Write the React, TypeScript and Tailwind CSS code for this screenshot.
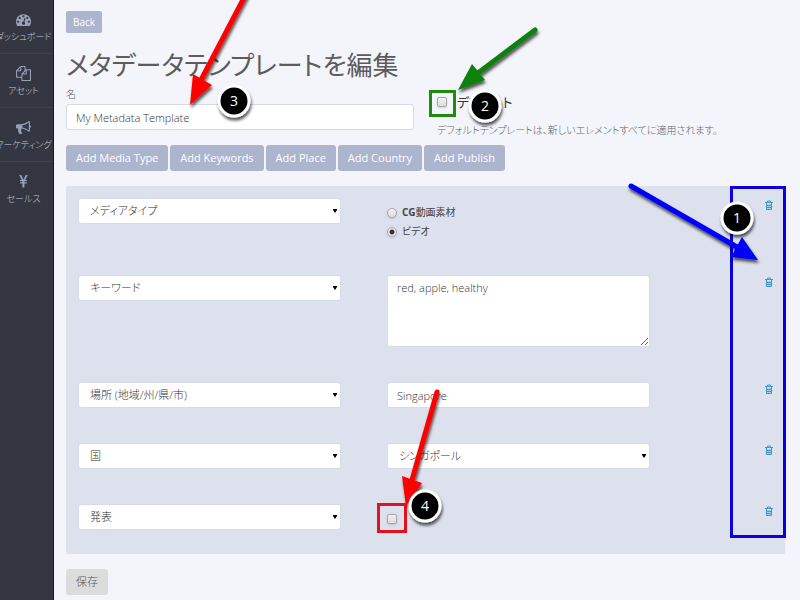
import React from 'react';

const ICONS = {
  dashboard:
    'M384 1152q0-53-37.5-90.5t-90.5-37.5-90.5 37.5-37.5 90.5 37.5 90.5 90.5 37.5 90.5-37.5 37.5-90.5zm192-448q0-53-37.5-90.5t-90.5-37.5-90.5 37.5-37.5 90.5 37.5 90.5 90.5 37.5 90.5-37.5 37.5-90.5zm428 481l101-382q6-26-7.5-48.5t-38.5-29.5-48 6.5-30 39.5l-101 382q-60 5-107 43.5t-63 98.5q-20 77 20 146t117 89 146-20 89-117q16-60-6-117t-72-91zm660-33q0-53-37.5-90.5t-90.5-37.5-90.5 37.5-37.5 90.5 37.5 90.5 90.5 37.5 90.5-37.5 37.5-90.5zm-640-640q0-53-37.5-90.5t-90.5-37.5-90.5 37.5-37.5 90.5 37.5 90.5 90.5 37.5 90.5-37.5 37.5-90.5zm448 192q0-53-37.5-90.5t-90.5-37.5-90.5 37.5-37.5 90.5 37.5 90.5 90.5 37.5 90.5-37.5 37.5-90.5zm320 448q0 261-141 483-19 29-54 29h-1402q-35 0-54-29-141-221-141-483 0-182 71-348t191-286 286-191 348-71 348 71 286 191 191 286 71 348z',
  files:
    'M1696 384q40 0 68 28t28 68v1216q0 40-28 68t-68 28h-960q-40 0-68-28t-28-68v-288h-544q-40 0-68-28t-28-68v-672q0-40 20-88t48-76l408-408q28-28 76-48t88-20h416q40 0 68 28t28 68v328q68-40 128-40h416zm-544 213l-299 299h299v-299zm-640-384l-299 299h299v-299zm196 647l316-316v-416h-384v416q0 40-28 68t-68 28h-416v640h512v-256q0-40 20-88t48-76zm956 804v-1152h-384v416q0 40-28 68t-68 28h-416v640h896z',
  bullhorn:
    'M1664 640q53 0 90.5 37.5t37.5 90.5-37.5 90.5-90.5 37.5v384q0 52-38 90t-90 38q-417-347-812-380-58 19-91 66t-31 100.5 40 92.5q-20 33-23 65.5t6 58 33.5 55 48 50 61.5 50.5q-29 58-111.5 83t-168.5 11.5-132-55.5q-7-23-29.5-87.5t-32-94.5-23-89-15-101 3.5-98.5 22-110.5h-122q-66 0-113-47t-47-113v-192q0-66 47-113t113-47h480q435 0 896-384 52 0 90 38t38 90v384zm-128 604v-954q-394 302-768 343v270q377 42 768 341z',
  yen:
    'M1410 120h-250l-264 570-264-570h-250l300 600h-200v150h284v110h-284v150h284v490h240v-490h284v-150h-284v-110h284v-150h-200z',
};

const NAV: { label: string; icon: keyof typeof ICONS }[] = [
  { label: 'ダッシュボード', icon: 'dashboard' },
  { label: 'アセット', icon: 'files' },
  { label: 'マーケティング', icon: 'bullhorn' },
  { label: 'セールス', icon: 'yen' },
];

const ADD_BUTTONS = ['Add Media Type', 'Add Keywords', 'Add Place', 'Add Country', 'Add Publish'];

const FIELD =
  'w-full rounded-[3px] border border-[#d6dbe7] bg-white text-[11px] font-light text-[#333] outline-none';
const TICK =
  'h-[10px] w-[10px] shrink-0 appearance-none border border-[#a6a6a6] bg-linear-to-b from-[#f2f2f2] to-[#dcdcdc] shadow-sm';

function SelectBox({ label, value }: { label: string; value: string }) {
  return (
    <div className="relative w-[85%]">
      <select aria-label={label} defaultValue={value} className={`${FIELD} block h-[26px] appearance-none px-[11px]`}>
        <option>{value}</option>
      </select>
      <svg className="pointer-events-none absolute top-[11px] right-1 h-1 w-1" viewBox="0 0 4 4" aria-hidden="true">
        <path d="M0 0h4v1L2 4 0 1z" fill="#000" />
      </svg>
    </div>
  );
}

function TrashIcon() {
  return (
    <svg className="h-[10px] w-2" viewBox="0 0 8 10" fill="none" stroke="#3f98c8" aria-hidden="true">
      <path d="M1 4h6v5H1z" fill="#a9d0e6" stroke="none" />
      <path d="M0 2.5h8M2.5 2.5v-1.500h3v1.500M1.500 3v6.500h5V3M2 5.500h4M2 7.500h4" />
    </svg>
  );
}

function Row({ name, children }: { name: string; children: React.ReactNode }) {
  return (
    <div className="grid grid-cols-[309fr_309fr_77fr] items-start">
      <SelectBox label="フィールド" value={name} />
      {children}
      <button type="button" aria-label={`${name}を削除`} className="mt-[2px] flex justify-self-end">
        <TrashIcon />
      </button>
    </div>
  );
}

function Radio({ label, checked, strong }: { label: string; checked?: boolean; strong?: string }) {
  return (
    <label className="flex h-[19px] items-center gap-[5px] text-[10px] text-[#444]">
      <input
        type="radio"
        name="media"
        defaultChecked={checked}
        className={`${TICK} rounded-full checked:bg-[radial-gradient(circle,#333_2px,#f0f0f0_3px)]`}
      />
      <span>
        {strong && <b className="font-bold">{strong}</b>}
        {label}
      </span>
    </label>
  );
}

function Arrow({ line, head, color }: { line: string; head: string; color: string }) {
  return (
    <g filter="url(#shade)">
      <path d={line} stroke={color} strokeWidth="5" strokeLinecap="round" />
      <path d={head} fill={color} />
    </g>
  );
}

function Badge({ x, y, n }: { x: number; y: number; n: number }) {
  return (
    <g>
      <circle cx={x} cy={y} r="15" fill="#000" stroke="#fff" strokeWidth="3" filter="url(#shade)" />
      <text x={x} y={y + 5} textAnchor="middle" fill="#fff" className="text-[14px]">
        {n}
      </text>
    </g>
  );
}

function Annotations() {
  return (
    <svg className="pointer-events-none absolute top-0 left-0" width="800" height="600" fill="none">
      <defs>
        <filter id="shade" x="-30%" y="-30%" width="170%" height="170%">
          <feDropShadow dx="1" dy="3" stdDeviation="1.5" floodColor="#000" floodOpacity="0.65" />
        </filter>
      </defs>
      <rect x="731.5" y="187.5" width="53" height="349" stroke="#0a00e0" strokeWidth="3" />
      <rect x="430.5" y="91.5" width="24" height="24" stroke="#1f8a0c" strokeWidth="3" />
      <Arrow color="#f00" line="M246-6L201 80" head="M190 105L193 74L212 85z" />
      <Arrow color="#088008" line="M535 30L478 73" head="M458 90L472 64L485 80z" />
      <Arrow color="#00f" line="M631 186L737 247" head="M758 260L742 237L731 257z" />
      <Arrow color="#f00" line="M437 392L412 480" head="M406 506L402 476L422 483z" />
      <rect x="378.5" y="504.5" width="27" height="27" stroke="#e4101c" strokeWidth="3" />
      <Badge x={234} y={101} n={3} />
      <Badge x={485} y={106} n={2} />
      <Badge x={737} y={218} n={1} />
      <Badge x={425} y={506} n={4} />
    </svg>
  );
}

export default function App() {
  return (
    <div className="relative flex min-h-screen overflow-hidden bg-[#f3f5fa] font-['Open_Sans','Noto_Sans_CJK_JP',sans-serif] text-[#555] [font-feature-settings:'palt']">
      <nav className="w-[54px] shrink-0 overflow-hidden border-r border-[#17152b] bg-[#343741]">
        {NAV.map(({ label, icon }) => (
          <a
            key={label}
            href="#"
            className="flex h-[54px] flex-col items-center border-b border-[#3e424d] pt-3 pr-[6px] text-[9px] leading-[14px] font-light whitespace-nowrap text-[#c3c9da] last:border-b-0"
          >
            <svg className="mb-[3px] h-[15px] w-[15px] shrink-0" viewBox="0 0 1792 1792" fill="#98a1b9" aria-hidden="true">
              <path d={ICONS[icon]} />
            </svg>
            {label}
          </a>
        ))}
      </nav>

      <main className="min-w-0 flex-1 pt-[11px] pr-[15px] pl-3">
        <button type="button" className="block h-[22px] rounded-[2px] bg-[#adb5ce] px-[7px] text-[10px] text-white">
          Back
        </button>
        <h1 className="mt-4 text-[26px] leading-8 font-normal whitespace-nowrap text-[#5c5c5c]">メタデータテンプレートを編集</h1>

        <div className="mt-[6px] grid grid-cols-2 gap-[23px]">
          <div>
            <label htmlFor="name" className="block text-[10px] leading-[14px] font-light">
              名
            </label>
            <input id="name" defaultValue="My Metadata Template" className={`${FIELD} mt-[3px] block h-[26px] px-[9px]`} />
          </div>
          <div className="pt-2">
            <label className="flex items-center gap-[10px] text-[13px] leading-[14px] text-[#333]">
              <input type="checkbox" className={`${TICK} rounded-[2px]`} />
              デフォルト
            </label>
            <p className="mt-[14px] text-[10px] leading-[14px] font-light whitespace-nowrap text-[#666]">
              デフォルトテンプレートは、新しいエレメントすべてに適用されます。
            </p>
          </div>
        </div>

        <div className="mt-2 flex gap-[2px]">
          {ADD_BUTTONS.map((b) => (
            <button key={b} type="button" className="h-[26px] rounded-[3px] bg-[#adb5ce] px-[10px] text-[11px] whitespace-nowrap text-white">
              {b}
            </button>
          ))}
        </div>

        <section className="mt-[15px] flex flex-col gap-[35px] rounded-[2px] bg-[#dde1ed] px-3 pt-3 pb-6">
          <Row name="メディアタイプ">
            <div className="h-[42px] pt-[5px]">
              <Radio strong="CG" label="動画素材" />
              <Radio label="ビデオ" checked />
            </div>
          </Row>
          <Row name="キーワード">
            <textarea aria-label="キーワード" defaultValue="red, apple, healthy" className={`${FIELD} block h-[72px] max-w-[85%] px-[9px] py-1 leading-4`} />
          </Row>
          <Row name="場所 (地域/州/県/市)">
            <input aria-label="場所" defaultValue="Singapore" className={`${FIELD} h-[26px] max-w-[85%] px-[9px]`} />
          </Row>
          <Row name="国">
            <SelectBox label="国" value="シンガポール" />
          </Row>
          <Row name="発表">
            <input type="checkbox" aria-label="発表" className={`${TICK} mt-[10px] rounded-[2px]`} />
          </Row>
        </section>

        <button type="submit" className="mt-[15px] block h-[26px] rounded-[3px] bg-[#dcdcdc] px-[10px] text-[11px] font-light text-[#555]">
          保存
        </button>
      </main>

      <Annotations />
    </div>
  );
}
